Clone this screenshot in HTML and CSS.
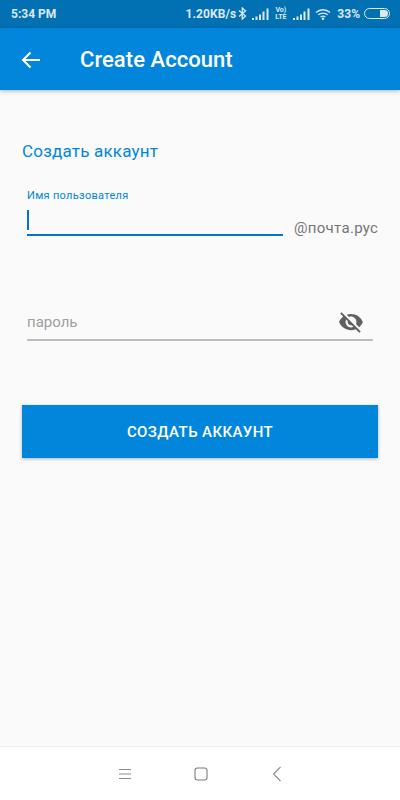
FILE: index.html
```html
<!DOCTYPE html>
<html lang="ru">
<head>
  <meta charset="UTF-8">
  <meta name="viewport" content="width=device-width, initial-scale=1">
  <title>Create Account</title>
  <link rel="stylesheet" href="styles.css">
</head>
<body>
  <div class="phone">
    <!-- status bar -->
    <div class="status">
      <span class="time">5:34 PM</span>
      <div class="status-right">
        <span class="speed">1.20KB/s</span>
        <svg class="ic-bt" width="9" height="13" viewBox="0 0 9 13"><path d="M1 3.500 7.500 9 4.300 12V1L7.500 4 1 9.500" fill="none" stroke="#dce9f3" stroke-width="1.300"/></svg>
        <svg class="ic-sig" width="17" height="12" viewBox="0 0 17 12"><path d="M0 10h2v2H0zM3.500 8.500h2V12h-2zM7 6.500h2V12H7zM10.500 3.500h2V12h-2zM14.500 0.500h2V12h-2z" fill="#dce9f3"/></svg>
        <span class="volte">Vo)<br>LTE</span>
        <svg class="ic-sig" width="17" height="12" viewBox="0 0 17 12"><path d="M0 10h2v2H0zM3.500 8.500h2V12h-2zM7 6.500h2V12H7zM10.500 3.500h2V12h-2zM14.500 0.500h2V12h-2z" fill="#dce9f3"/></svg>
        <svg class="ic-wifi" width="17" height="12" viewBox="0 0 17 12"><path d="M1 4.500C5 .8 11 .8 15 4.500M3.300 6.800c2.700-2.300 6.700-2.300 9.400 0M5.600 9c1.400-1 3.400-1 4.800 0" fill="none" stroke="#dce9f3" stroke-width="1.300"/><circle cx="8" cy="10.700" r="1.200" fill="#dce9f3"/></svg>
        <span class="batt-txt">33%</span>
        <div class="battery"><div class="battery-level"></div></div>
      </div>
    </div>

    <!-- toolbar -->
    <header class="toolbar">
      <svg class="back" width="20" height="20" viewBox="0 0 20 20"><path d="M19 10H2M9.500 2.500 2 10l7.500 7.500" fill="none" stroke="#fff" stroke-width="2"/></svg>
      <h1 class="title">Create Account</h1>
    </header>

    <main class="content">
      <h2 class="heading">Создать аккаунт</h2>

      <div class="email-row">
        <div class="field field-active">
          <label class="float-label">Имя пользователя</label>
          <div class="input-line"><span class="caret"></span></div>
        </div>
        <span class="suffix">@почта.рус</span>
      </div>

      <div class="field-pass">
        <span class="placeholder">пароль</span>
        <svg class="eye" width="26" height="26" viewBox="0 0 24 24"><path d="M12 7c2.760 0 5 2.240 5 5 0 .65-.13 1.260-.36 1.830l2.920 2.920c1.510-1.260 2.700-2.890 3.430-4.750-1.730-4.390-6-7.500-11-7.500-1.400 0-2.740.25-3.980.7l2.160 2.160C10.740 7.130 11.350 7 12 7zM2 4.270l2.280 2.280.46.46C3.080 8.300 1.780 10.020 1 12c1.730 4.390 6 7.500 11 7.500 1.550 0 3.030-.3 4.380-.84l.42.42L19.730 22 21 20.730 3.270 3 2 4.270zM7.530 9.800l1.550 1.550c-.05.21-.08.430-.08.650 0 1.660 1.340 3 3 3 .22 0 .44-.03.650-.08l1.550 1.550c-.67.33-1.410.53-2.200.53-2.760 0-5-2.240-5-5 0-.79.2-1.530.53-2.200z" fill="#616161"/></svg>
      </div>

      <button class="submit">СОЗДАТЬ АККАУНТ</button>
    </main>

    <!-- nav bar -->
    <nav class="navbar">
      <svg width="14" height="14" viewBox="0 0 14 14"><path d="M1 2.500h12M1 7h12M1 11.500h12" stroke="#8c8c8c" stroke-width="1"/></svg>
      <svg width="14" height="14" viewBox="0 0 14 14"><rect x="1" y="1" width="12" height="12" rx="2.500" fill="none" stroke="#7d7d7d" stroke-width="1.100"/></svg>
      <svg class="nav-back" width="10" height="16" viewBox="0 0 10 16"><path d="M8.500 1 1.500 8l7 7" fill="none" stroke="#8c8c8c" stroke-width="1.100"/></svg>
    </nav>
  </div>
</body>
</html>
```

FILE: styles.css
```css
* {
  box-sizing: border-box;
}
body {
  margin: 0;
  font-family: Roboto, "Liberation Sans", sans-serif;
  background: #fafafa;
}
.phone {
  width: 400px;
  height: 800px;
  display: flex;
  flex-direction: column;
  overflow: hidden;
}

.status {
  height: 28px;
  flex: none;
  background: #0271b4;
  color: #dce9f3;
  display: flex;
  align-items: center;
  justify-content: space-between;
  padding: 0 10px 1px 11px;
  font-size: 12px;
  font-weight: 700;
}
.status-right {
  display: flex;
  align-items: center;
}
.speed {
  letter-spacing: 0.1px;
}
.ic-bt {
  margin-left: 2px;
}
.ic-sig {
  margin-left: 5px;
}
.volte {
  width: 13px;
  font-size: 7px;
  line-height: 7px;
  text-align: center;
  margin-left: 5px;
}
.volte + .ic-sig {
  margin-left: 6px;
}
.ic-wifi {
  margin-left: 5px;
}
.batt-txt {
  margin-left: 5px;
}
.battery {
  width: 26px;
  height: 11px;
  margin-left: 4px;
  border: 1px solid #dce9f3;
  border-radius: 6px;
  padding: 1px;
  display: flex;
  justify-content: flex-end;
}
.battery-level {
  width: 8px;
  background: #dce9f3;
  border-radius: 0 4px 4px 0;
}

.toolbar {
  height: 62px;
  flex: none;
  background: #0286dc;
  display: flex;
  align-items: center;
  padding: 1px 0 0 21px;
  box-shadow: 0 1px 4px rgba(0,0,0,0.3);
  position: relative;
}
.back {
  flex: none;
}
.title {
  margin: 0 0 0 39px;
  font-size: 22px;
  font-weight: 500;
  color: #fff;
  letter-spacing: 0.05px;
}

.content {
  flex: 1;
  padding: 50px 22px 0 22px;
}
.heading {
  margin: 0;
  font-size: 17px;
  line-height: 22px;
  font-weight: 400;
  color: #0286dc;
  letter-spacing: 0.2px;
}

.email-row {
  display: flex;
  align-items: flex-end;
  margin-top: 27px;
  padding-left: 5px;
}
.field {
  width: 256px;
  flex: none;
}
.float-label {
  display: block;
  font-size: 11px;
  line-height: 14px;
  color: #0286dc;
  letter-spacing: 0.3px;
}
.input-line {
  height: 33px;
  border-bottom: 2px solid #0277c8;
  padding-top: 7px;
}
.caret {
  display: block;
  width: 2px;
  height: 20px;
  background: #0277c8;
}
.suffix {
  margin-left: 11px;
  font-size: 15px;
  line-height: 18px;
  color: #757575;
  letter-spacing: 0.3px;
  margin-bottom: -1px;
}

.field-pass {
  margin: 68px 5px 0 5px;
  height: 37px;
  border-bottom: 2px solid #bdbdbd;
  display: flex;
  align-items: center;
  justify-content: space-between;
  padding-right: 9px;
}
.placeholder {
  font-size: 15px;
  color: #9e9e9e;
}

.submit {
  display: block;
  width: 100%;
  height: 53px;
  margin-top: 64px;
  border: none;
  border-radius: 0;
  background: #0286dc;
  color: #fff;
  font-family: inherit;
  font-size: 15px;
  font-weight: 500;
  letter-spacing: 0.4px;
  box-shadow: 0 1px 3px rgba(0,0,0,0.3);
}

.navbar {
  height: 54px;
  flex: none;
  background: #fff;
  border-top: 1px solid #eeeeee;
  display: flex;
  align-items: center;
  justify-content: center;
  gap: 62px;
}
.nav-back {
  margin-left: 2px;
}
```
